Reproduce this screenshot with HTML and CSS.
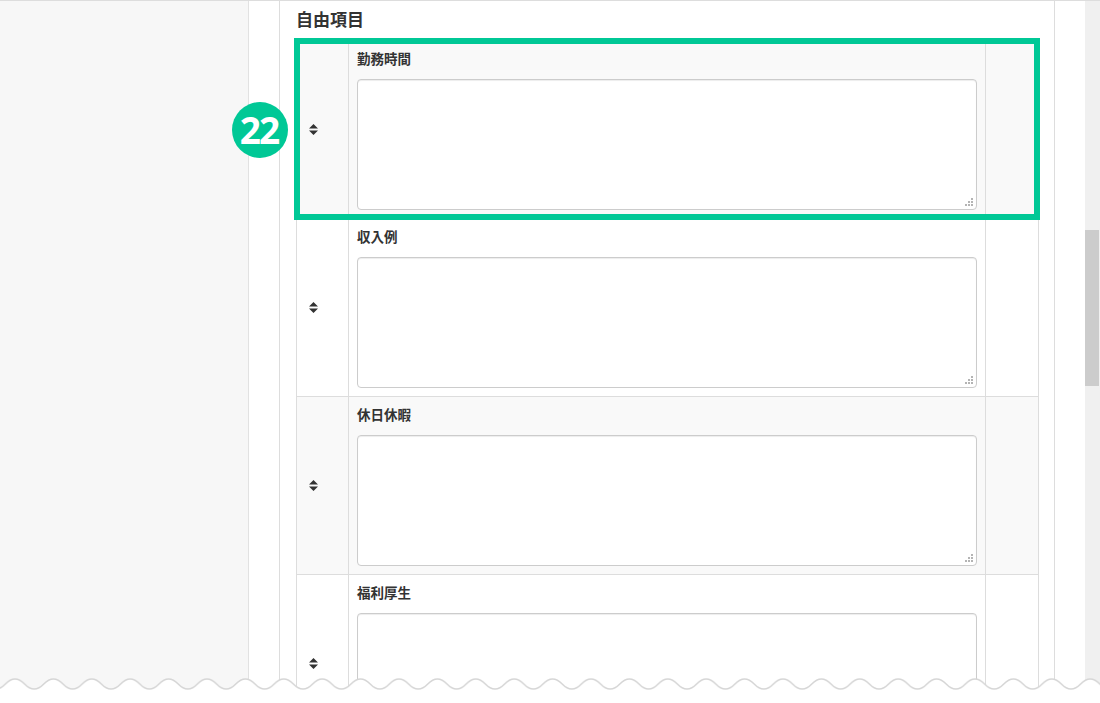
FILE: index.html
```html
<!DOCTYPE html>
<html lang="ja">
<head>
  <meta charset="UTF-8" />
  <title>自由項目</title>
  <link rel="stylesheet" href="styles.css">
</head>
<body>
  <div class="page">
    <aside class="sidebar"></aside>

    <main class="panel">
      <h2 class="panel-title">自由項目</h2>
      <table class="free-table">
        <tbody>
          <tr>
            <td class="handle-cell"><svg class="sort-icon" viewBox="0 0 9 11"><path d="M4.5 0L9 4.5H0Z M0 6.5H9L4.5 11Z"/></svg></td>
            <td class="field-cell">
              <label class="field-label">勤務時間</label>
              <div class="field-box"><textarea class="field-input"></textarea></div>
            </td>
            <td class="extra-cell"></td>
          </tr>
          <tr>
            <td class="handle-cell"><svg class="sort-icon" viewBox="0 0 9 11"><path d="M4.5 0L9 4.5H0Z M0 6.5H9L4.5 11Z"/></svg></td>
            <td class="field-cell">
              <label class="field-label">収入例</label>
              <div class="field-box"><textarea class="field-input"></textarea></div>
            </td>
            <td class="extra-cell"></td>
          </tr>
          <tr>
            <td class="handle-cell"><svg class="sort-icon" viewBox="0 0 9 11"><path d="M4.5 0L9 4.5H0Z M0 6.5H9L4.5 11Z"/></svg></td>
            <td class="field-cell">
              <label class="field-label">休日休暇</label>
              <div class="field-box"><textarea class="field-input"></textarea></div>
            </td>
            <td class="extra-cell"></td>
          </tr>
          <tr>
            <td class="handle-cell"><svg class="sort-icon" viewBox="0 0 9 11"><path d="M4.5 0L9 4.5H0Z M0 6.5H9L4.5 11Z"/></svg></td>
            <td class="field-cell">
              <label class="field-label">福利厚生</label>
              <div class="field-box"><textarea class="field-input"></textarea></div>
            </td>
            <td class="extra-cell"></td>
          </tr>
        </tbody>
      </table>
    </main>

    <div class="scrollbar"><div class="scroll-thumb"></div></div>

    <div class="highlight"></div>
    <div class="step-badge">22</div>

    <svg class="torn-edge" width="1100" height="25">
      <defs>
        <pattern id="wave" x="-4.2" y="0" width="38.4" height="25" patternUnits="userSpaceOnUse">
          <path d="M0 11C9.6 11 9.6 1 19.2 1C28.8 1 28.8 11 38.4 11L38.4 25L0 25Z" fill="#fff"/>
          <path d="M0 11C9.6 11 9.6 1 19.2 1C28.8 1 28.8 11 38.4 11" fill="none" stroke="#d6d6d6" stroke-width="1.5"/>
        </pattern>
      </defs>
      <rect width="1100" height="25" fill="url(#wave)"/>
    </svg>
  </div>
</body>
</html>
```

FILE: styles.css
```css
body {
  margin: 0;
  font-family: "Noto Sans CJK JP", "Noto Sans", sans-serif;
  color: #333;
  background: #fff;
  overflow: hidden;
}

.page {
  position: relative;
  display: flex;
  height: 702px;
  border-top: 1px solid #dddddd;
  overflow: hidden;
}

.sidebar {
  width: 248px;
  flex-shrink: 0;
  background: #f7f7f7;
  border-right: 1px solid #e2e2e2;
}

.panel {
  width: 743px;
  flex-shrink: 0;
  margin-left: 30px;
  padding: 6px 15px 0 16px;
  border-left: 1px solid #dddddd;
  border-right: 1px solid #dddddd;
  background: #fff;
}

.panel-title {
  margin: 0 0 9px;
  font-size: 17px;
  line-height: 24px;
  font-weight: bold;
}

.free-table {
  width: 743px;
  border-collapse: collapse;
  table-layout: fixed;
}

.free-table td {
  border: 1px solid #dddddd;
  padding: 0;
}

.free-table tr:nth-child(odd) td {
  background: #f9f9f9;
}

.handle-cell {
  width: 39px;
  padding-left: 12px !important;
  vertical-align: middle;
}

.sort-icon {
  display: block;
  width: 9px;
  height: 11px;
  fill: #333;
}

.field-cell {
  padding: 8px 8px 8px !important;
}

.extra-cell {
  width: 52px;
}

.field-label {
  display: block;
  margin-bottom: 12px;
  font-size: 13.5px;
  line-height: 18px;
  font-weight: bold;
}

.field-box {
  position: relative;
}

/* resize grip dots */
.field-box::after {
  content: "";
  position: absolute;
  right: 4px;
  bottom: 4px;
  width: 2px;
  height: 2px;
  background: #b4b4b4;
  box-shadow: -3px 0 #b4b4b4, -6px 0 #b4b4b4, 0 -3px #b4b4b4, -3px -3px #b4b4b4, 0 -6px #b4b4b4;
}

.field-input {
  display: block;
  box-sizing: border-box;
  width: 100%;
  height: 131px;
  margin: 0;
  border: 1px solid #cccccc;
  border-radius: 4px;
  background: #fff;
  box-shadow: inset 0 1px 1px rgba(0, 0, 0, 0.075);
  resize: none;
}

.scrollbar {
  width: 15px;
  margin-left: auto;
  background: #f0f0f0;
  flex-shrink: 0;
}

.scroll-thumb {
  width: 14px;
  height: 156px;
  margin-top: 229px;
  background: #cccccc;
}

.highlight {
  position: absolute;
  left: 294px;
  top: 37px;
  width: 734px;
  height: 170px;
  border: 6px solid #00c896;
}

.step-badge {
  position: absolute;
  left: 232px;
  top: 101px;
  width: 56px;
  height: 56px;
  border-radius: 50%;
  background: #00c896;
  color: #fff;
  font-family: "Noto Sans", sans-serif;
  font-weight: bold;
  font-size: 37px;
  line-height: 56px;
  text-align: center;
  letter-spacing: -2px;
  text-indent: -2px;
}

.torn-edge {
  position: absolute;
  left: 0;
  bottom: 0;
  display: block;
}
```
